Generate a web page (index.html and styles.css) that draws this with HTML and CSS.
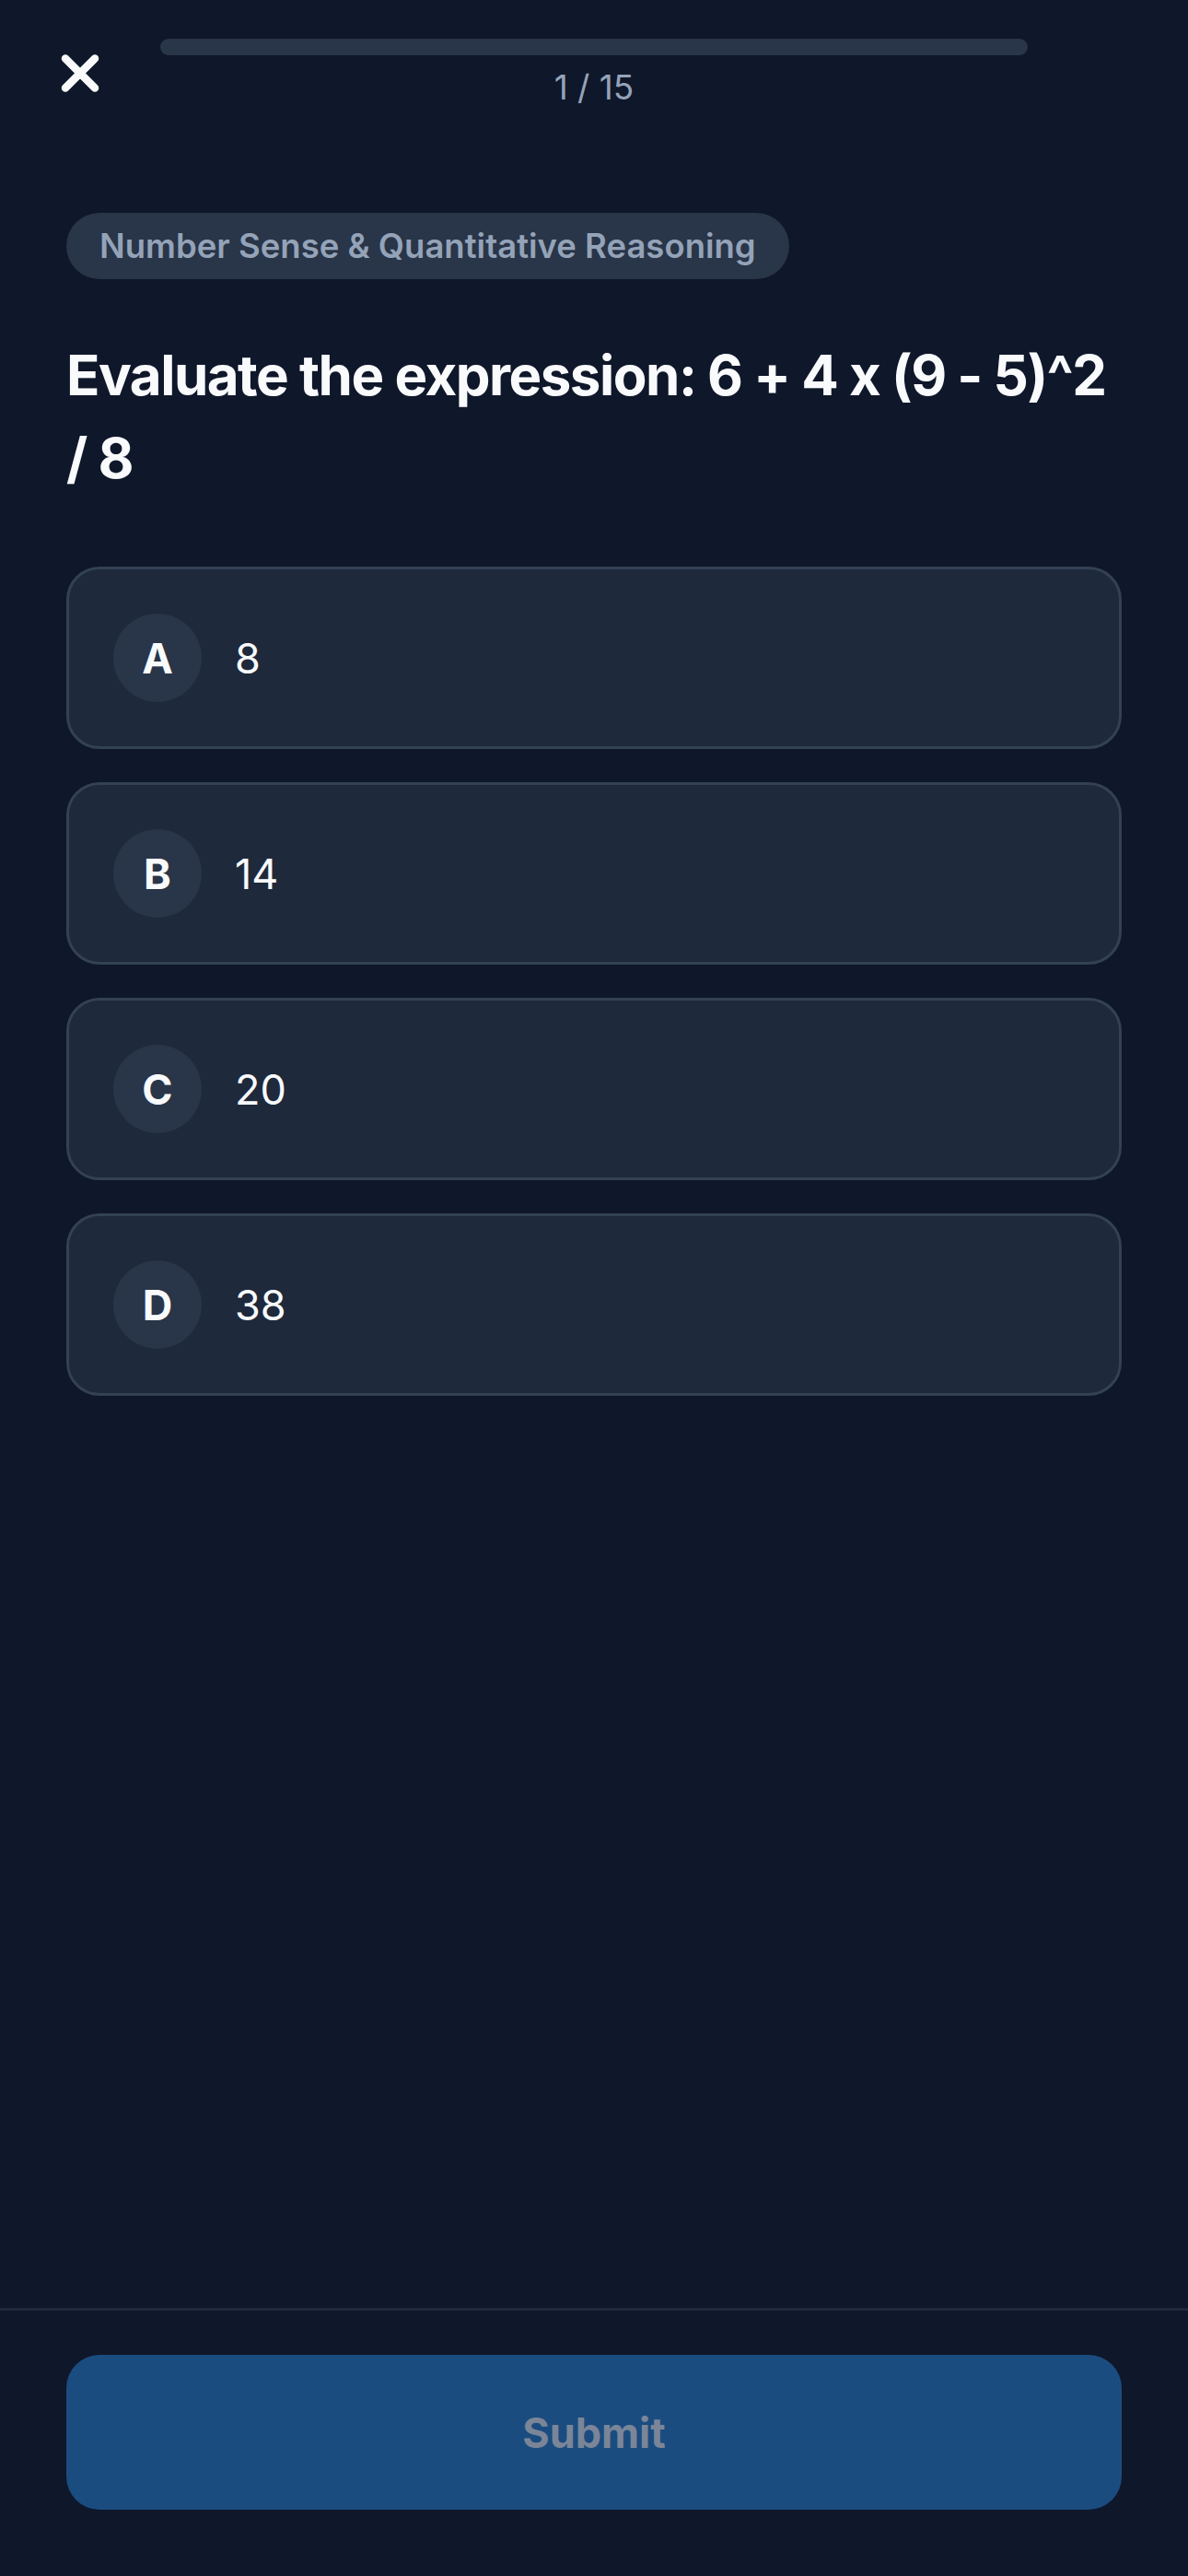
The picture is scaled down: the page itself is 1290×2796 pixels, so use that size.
FILE: index.html
```html
<!DOCTYPE html>
<html lang="en">
<head>
    <meta charset="UTF-8">
    <meta name="viewport" content="width=device-width, initial-scale=1.0">
    <title>Quiz</title>
    <link rel="stylesheet" href="styles.css">
</head>
<body>
    <header class="quiz-header">
        <button class="close-btn" aria-label="Close">
            <svg width="42" height="43" viewBox="0 0 42 43">
                <path d="M5 5.5 L37 37.5 M37 5.5 L5 37.5" stroke="#f8fafc" stroke-width="8.5" stroke-linecap="round" fill="none"/>
            </svg>
        </button>
        <div class="progress">
            <div class="progress-track"></div>
            <span class="progress-label">1 / 15</span>
        </div>
    </header>

    <main class="quiz-body">
        <span class="topic-tag">Number Sense &amp; Quantitative Reasoning</span>
        <h1 class="question">Evaluate the expression: 6 + 4 x (9 - 5)^2 / 8</h1>

        <div class="options">
            <div class="option">
                <span class="option-letter">A</span>
                <span class="option-text">8</span>
            </div>
            <div class="option">
                <span class="option-letter">B</span>
                <span class="option-text">14</span>
            </div>
            <div class="option">
                <span class="option-letter">C</span>
                <span class="option-text">20</span>
            </div>
            <div class="option">
                <span class="option-letter">D</span>
                <span class="option-text">38</span>
            </div>
        </div>
    </main>

    <footer class="quiz-footer">
        <button class="submit-btn" disabled>Submit</button>
    </footer>
</body>
</html>
```

FILE: styles.css
```css
* {
    box-sizing: border-box;
}
html, body {
    height: 100%;
}
body {
    margin: 0;
    min-height: 2796px;
    display: flex;
    flex-direction: column;
    background: #0f172a;
    color: #f8fafc;
    font-family: Inter, "Noto Sans", sans-serif;
}
.quiz-header {
    display: grid;
    grid-template-columns: 108px 1fr 108px;
    align-items: center;
    padding: 42px 66px 0;
}
.close-btn {
    display: flex;
    padding: 0;
    border: none;
    background: none;
    cursor: pointer;
}
.progress {
    display: flex;
    flex-direction: column;
    align-items: center;
    gap: 13px;
}
.progress-track {
    width: 100%;
    height: 18px;
    border-radius: 9px;
    background: #293548;
}
.progress-label {
    font-size: 37px;
    line-height: 44px;
    color: #94a3b8;
}
.quiz-body {
    flex: 1;
    display: flex;
    flex-direction: column;
    align-items: flex-start;
    padding: 114px 72px 0;
}
.topic-tag {
    padding: 16px 36px;
    border-radius: 36px;
    background: #293548;
    color: #94a3b8;
    font-size: 36.5px;
    line-height: 40px;
    font-weight: 600;
}
.question {
    margin: 59px 0 73px;
    font-size: 60px;
    line-height: 90px;
    font-weight: 700;
    letter-spacing: -0.025em;
}
.options {
    align-self: stretch;
    display: flex;
    flex-direction: column;
    gap: 36px;
}
.option {
    display: flex;
    align-items: center;
    gap: 36px;
    padding: 48px;
    border: 3px solid #334155;
    border-radius: 36px;
    background: #1e293b;
}
.option-letter {
    display: flex;
    align-items: center;
    justify-content: center;
    width: 96px;
    height: 96px;
    border-radius: 50%;
    background: #293548;
    font-size: 45px;
    font-weight: 700;
}
.option-text {
    font-size: 45px;
}
.quiz-footer {
    padding: 48px 72px 72px;
    border-top: 3px solid #1e293b;
}
.submit-btn {
    width: 100%;
    height: 168px;
    border: none;
    border-radius: 36px;
    background: #1b4c80;
    color: #7a8698;
    font-family: inherit;
    font-size: 45px;
    font-weight: 700;
}
```
